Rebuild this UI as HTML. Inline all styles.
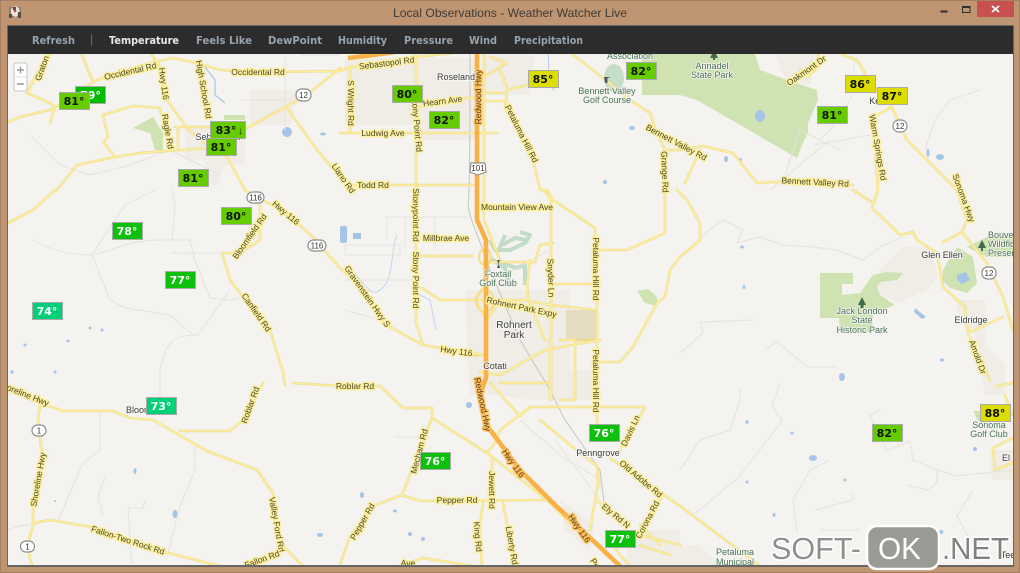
<!DOCTYPE html>
<html><head><meta charset="utf-8"><title>Local Observations - Weather Watcher Live</title>
<style>
html,body{margin:0;padding:0;width:1020px;height:573px;overflow:hidden;background:#bf9470}
svg{display:block;position:absolute;left:0;top:0}
.g{fill:none;stroke:#e4e3df;stroke-width:1}
.r{fill:none;stroke:#ecd98a;stroke-width:2.6;stroke-linejoin:round;stroke-linecap:round}
.ri{fill:none;stroke:#fbee9c;stroke-width:1.6;stroke-linejoin:round;stroke-linecap:round}
.h{fill:none;stroke:#f9b044;stroke-width:4.6;stroke-linejoin:round}
text{font-family:"Liberation Sans",sans-serif}
.l{font-size:8.5px;fill:#4c4a2c;stroke:#fbee9c;stroke-width:3;paint-order:stroke;text-anchor:middle;stroke-linejoin:round}
.lh{font-size:8.5px;fill:#5a3a10;stroke:#fbc060;stroke-width:3;paint-order:stroke;text-anchor:middle;stroke-linejoin:round}
.p{font-size:9px;fill:#3d3d3d;stroke:#f7f6f3;stroke-width:2;paint-order:stroke;text-anchor:middle}
.pg{font-size:9px;fill:#4c7458;stroke:#f5f5f0;stroke-width:1.5;paint-order:stroke;text-anchor:middle}
.s{font-size:8px;fill:#333;text-anchor:middle}
.sh{fill:#fff;stroke:#8f8f8f;stroke-width:1.2}
.n{font-family:"DejaVu Sans",sans-serif;font-weight:bold;font-size:11px;fill:#98a3ad}
.b{stroke:#aaa;stroke-width:1}
.t{font-family:"DejaVu Sans",sans-serif;font-weight:bold;font-size:11px;text-anchor:middle}
.w{fill:#fff}.k{fill:#0a1400}
.lk{fill:#a4c4e8}
</style></head><body>
<svg width="1020" height="573" viewBox="0 0 1020 573" xmlns="http://www.w3.org/2000/svg">
<rect width="1020" height="573" fill="#bf9470"/>
<rect x="0.5" y="0.5" width="1019" height="572" fill="none" stroke="#a57f60"/>
<rect x="7" y="25" width="1007" height="542" fill="#666"/>
<svg x="8" y="26" width="1005" height="539" viewBox="8 26 1005 539">
<rect x="8" y="26" width="1005" height="539" fill="#f4f3f0"/>
<!-- tan urban areas -->
<g fill="#f0ede6">
<path d="M345 58H475V140H420V125H345Z"/>
<path d="M484 55H535L530 95H484Z"/>
<path d="M185 125H245V165H225L218 185H205V160H185Z"/>
<path d="M250 90H300L290 125H250Z"/>
<path d="M465 290H570V370H600V400H530L500 395H470Z"/>
<path d="M877 280L880 270 903 247H930L938 277 927 290 897 303 880 293Z"/>
<path d="M955 300H985V345L975 335 960 320Z"/>
<path d="M975 335L1005 365V395H985Z"/>
<path d="M990 450H1013V480H992Z"/>
<path d="M560 500L595 525 590 550 565 530Z"/>
<path d="M630 530H680V565H625Z"/>
<path d="M680 545H700L720 566H680Z"/>
<path d="M775 54H815L810 85 785 78Z"/>
</g>
<rect x="566" y="310" width="30" height="29" fill="#e6dcc2"/>
<!-- parks -->
<g fill="#cfe2b2">
<path d="M642 54H755L760 70 787 80 817 90 818 100 808 123V133L803 143 797 158 697 100 680 95H642Z"/>
<path d="M820 273H853V284H842V295L860 293 873 275 887 272 903 273 897 280 880 282 877 287 880 295 895 305 873 313 872 332H840L839 318H820Z"/>
<path d="M943 270L957 247 973 257 977 283 967 293 950 288 942 280Z"/>
<path d="M967 247L987 237H1013V257H987Z"/>
<path d="M133 128L153 117 163 133V150H155L150 133Z"/>
<path d="M637 291L648 289 657 297 657 306 645 303Z"/>
<path d="M973 411H982V421H978Z"/>
<path d="M224 115H245V120H224Z"/>
</g>
<ellipse cx="614" cy="78" rx="10" ry="14" fill="#c6dec8"/>
<g fill="none" stroke="#c3dcc6" stroke-width="4" stroke-linejoin="round">
<path d="M490 240L495 250 510 250 525 243 530 235 520 232"/>
<path d="M502 245L515 238 527 240"/>
<path d="M500 262L516 268 525 265 525 285"/>
<path d="M490 258L505 268 510 285"/>
<path d="M505 235L498 252"/>
</g>
<!-- water -->
<g class="lk">
<ellipse cx="287" cy="132" rx="5" ry="5"/>
<ellipse cx="760" cy="116" rx="5" ry="6"/>
<rect x="340" y="226" width="7" height="17" rx="2"/>
<rect x="353" y="233" width="8" height="6"/>
<path d="M957 275L966 272 970 280 962 284 957 280Z"/>
<ellipse cx="940" cy="157" rx="4" ry="3"/>
<ellipse cx="928" cy="153" rx="1.5" ry="4"/>
<ellipse cx="469" cy="405" rx="3" ry="3"/>
<ellipse cx="813" cy="458" rx="4" ry="3"/>
<ellipse cx="175" cy="514" rx="2.5" ry="4"/>
<ellipse cx="842" cy="377" rx="3" ry="4"/>
<path d="M915 308L926 317 922 319 914 312Z"/>
<ellipse cx="632" cy="128" rx="3" ry="2"/>
<ellipse cx="323" cy="134" rx="3" ry="1.5"/>
<ellipse cx="605" cy="182" rx="2" ry="2"/>
<ellipse cx="740" cy="160" rx="2" ry="2"/>
<ellipse cx="726" cy="159" rx="2" ry="3"/>
<ellipse cx="742" cy="247" rx="2" ry="1.5"/>
<ellipse cx="744" cy="287" rx="1.5" ry="2"/>
<ellipse cx="942" cy="360" rx="2" ry="1.5"/>
<ellipse cx="941" cy="532" rx="2.5" ry="2"/>
<ellipse cx="975" cy="449" rx="2" ry="2"/>
<ellipse cx="747" cy="482" rx="1.5" ry="1.5"/>
<ellipse cx="320" cy="535" rx="3" ry="2"/>
<ellipse cx="135" cy="471" rx="1.5" ry="3"/>
<ellipse cx="55" cy="501" rx="1" ry="1"/>
<ellipse cx="90" cy="328" rx="1.5" ry="1.5"/>
<ellipse cx="68" cy="341" rx="1.5" ry="1.5"/>
<ellipse cx="102" cy="330" rx="1.5" ry="1.5"/>
<ellipse cx="25" cy="345" rx="1.5" ry="1.5"/>
<ellipse cx="55" cy="372" rx="1.5" ry="1.5"/>
<ellipse cx="12" cy="372" rx="1.5" ry="2"/>
<ellipse cx="362" cy="495" rx="2" ry="3"/>
<ellipse cx="395" cy="511" rx="2" ry="1.5"/>
<ellipse cx="410" cy="534" rx="2" ry="2"/>
<ellipse cx="423" cy="539" rx="2" ry="2"/>
<ellipse cx="845" cy="480" rx="1.5" ry="1.5"/>
<ellipse cx="747" cy="422" rx="1.5" ry="2"/>
<ellipse cx="792" cy="433" rx="1.5" ry="1.5"/>
<ellipse cx="774" cy="515" rx="1.5" ry="2"/>
</g>
<path d="M548 54C550 70 545 85 555 90" fill="none" stroke="#b5cde8" stroke-width="1"/>
<path d="M205 67L215 80 215 95 225 103" fill="none" stroke="#a9c4e4" stroke-width="1.2"/>
<path d="M397 235C390 250 395 280 380 290 370 300 360 275 350 270" fill="none" stroke="#c3d6ec" stroke-width="1"/>
<path d="M420 295L430 300 436 330" fill="none" stroke="#c3d6ec" stroke-width="1"/>
<!-- grey minor roads -->
<g class="g">
<path d="M33 240C50 250 70 255 92 255L125 205 155 190"/>
<path d="M92 255L110 300 125 308 170 315 193 335 198 335 230 290"/>
<path d="M92 255C115 250 130 240 160 240H172L175 205 172 190"/>
<path d="M172 240L190 240 195 260 210 298 230 300 243 297"/>
<path d="M222 253H172"/>
<path d="M198 335C170 335 165 345 160 370V400"/>
<path d="M100 411V450L83 463 57 523"/>
<path d="M105 476L98 496 103 516"/>
<path d="M195 446V471L180 506 168 553"/>
<path d="M145 500L143 508H128L132 566"/>
<path d="M345 255H400V245H345ZM345 280H420M345 310L380 320"/>
<path d="M385 217H470M387 217V240M405 217V250M435 217V250"/>
<path d="M700 237L723 220 743 230 737 243 760 237 783 245 813 247 837 250 863 260 880 247 903 237"/>
<path d="M680 353L703 333 700 322 753 320"/>
<path d="M765 350L777 342 807 367H837"/>
<path d="M780 383L772 406 782 421 738 478 693 515"/>
<path d="M740 388V400L730 430 700 440 680 470"/>
<path d="M830 460L810 470 793 500 797 533"/>
<path d="M880 410L870 416 887 451 910 441 913 460 937 470V483L927 490 907 485"/>
<path d="M937 470L957 476 1013 470"/>
<path d="M815 510L853 500V493M820 530H860"/>
<path d="M973 490L957 516 970 540"/>
<path d="M840 150L800 130 785 175M855 60L850 100 830 130 815 145 870 135"/>
<path d="M980 90L950 100 935 120 925 150"/>
<path d="M770 190L800 165 830 140"/>
<path d="M285 55V130M240 100H290M300 55H340"/>
<path d="M30 135L60 165 90 175 130 165 170 150"/>
<path d="M170 150L220 175"/>
<path d="M395 437H430M520 420L560 455 600 480"/>
<path d="M555 440L600 500M600 470V490"/>
<path d="M505 275L550 250"/>
<path d="M8 530C20 525 30 525 33 523"/>
</g>
<path d="M470 54C470 120 470 190 468 205 470 220 478 235 490 270L520 340 550 390 565 420 600 470 605 510" fill="none" stroke="#c5c5c2" stroke-width="1"/>
<!-- roads -->
<g id="rd">
<path class="r" d="M93 82L110 75 150 63 173 58 197 63 220 70 267 72 340 71 350 67 417 57 453 53"/>
<path class="r" d="M152 55L160 67 165 97 187 128 200 140 227 157 245 190 255 197 283 210 313 237 340 268 350 277 383 323 423 345 483 355"/>
<path class="r" d="M340 68L307 95 247 128"/>
<path class="r" d="M287 108L317 150 340 177 352 185H478"/>
<path class="r" d="M197 63L207 117"/>
<path class="r" d="M160 108L170 147"/>
<path class="r" d="M27 93L50 103 55 107 50 123M103 115L133 106 160 108M103 115L108 137 103 142 115 157 140 153 180 150 227 147M57 190L77 165 115 157"/>
<path class="r" d="M0 123L8 122 20 117 50 110 75 97 93 82 82 55"/>
<path class="r" d="M50 55L37 73 27 93"/>
<path class="r" d="M175 127H212M178 127V148"/>
<path class="r" d="M350 67V133"/>
<path class="r" d="M340 133H497"/>
<path class="r" d="M416 54V323L423 345"/>
<path class="r" d="M417 107L467 98H475M484 101H507"/>
<path class="r" d="M505 108L533 160 540 190 547 190 553 200 595 228 597 300V425"/>
<path class="r" d="M484 93H507L505 108M484 77L507 63 490 57M507 90L527 85M500 70L507 87"/>
<path class="r" d="M573 55L593 70 630 100 650 113 657 133 665 150 680 150 703 146 733 153 757 183 773 182 820 182 853 185"/>
<path class="r" d="M700 150L685 183M665 150V233L627 250H600"/>
<path class="r" d="M843 55L857 60 873 87 890 103 907 140 947 180 957 190 967 220 962 232 987 263 1003 297 1013 330"/>
<path class="r" d="M892 107L873 117 878 190 872 208 900 235 913 232 917 240 937 253 943 287 965 307 968 333 990 380"/>
<path class="r" d="M853 190L873 203M943 242L962 232M970 332L1003 317"/>
<path class="r" d="M800 70L807 77 818 67V55"/>
<path class="r" d="M677 190L687 200 700 223V240L680 257 670 270 665 297 657 303 633 347 620 362H597"/>
<path class="r" d="M260 203V240L240 253H222L230 280 243 297 270 330 283 372 285 385"/>
<path class="r" d="M263 383L243 420 230 431H180"/>
<path class="r" d="M293 383L340 386H380L403 408H432V418L487 453 547 500 587 540"/>
<path class="r" d="M432 418L402 495 420 501 547 500M402 495L373 506 350 536 340 565"/>
<path class="r" d="M492 458V501M487 453L495 443 500 430 530 407H645L620 450M483 503L480 526 482 566M503 503L515 566M403 565L423 558 473 566"/>
<path class="r" d="M530 407L520 416 490 383M500 383H550M540 420L580 453 597 466 598 483 590 530"/>
<path class="r" d="M610 458L680 506 760 566M663 495L633 540M597 501L630 526"/>
<path class="r" d="M7 390L40 403 63 411H113L130 418 153 420 207 451 257 470 273 493 277 533 283 546 303 566"/>
<path class="r" d="M40 403L38 420 43 463 33 500V526L27 546 32 566"/>
<path class="r" d="M33 523L50 520 97 528 160 551 220 566M250 566L283 550"/>
<path class="r" d="M8 223L33 210 55 190"/>
<path class="r" d="M484 54V220L500 260M416 256H472M484 262H535L540 245 553 243M544 190L551 200V400M475 300L525 300 550 305 597 310"/>
<path class="r" d="M422 288L440 300 480 300M465 355L483 355M480 372L500 375 545 350 600 340M550 340V400M595 340H560M560 340H575L575 400H560"/>
<path class="r" d="M530 260L527 285 528 300 545 340M487 320L475 300 485 285M487 320L500 300M551 284H597"/>
<path class="r" d="M1012 438L993 448 995 470 1012 463M997 386L1012 383M1005 395L1012 415"/>
<path class="r" d="M640 535L680 545M640 545L670 555M610 540L620 555 630 566M640 525L660 545"/>
</g>
<g>
<path class="ri" d="M93 82L110 75 150 63 173 58 197 63 220 70 267 72 340 71 350 67 417 57 453 53"/>
<path class="ri" d="M152 55L160 67 165 97 187 128 200 140 227 157 245 190 255 197 283 210 313 237 340 268 350 277 383 323 423 345 483 355"/>
<path class="ri" d="M340 68L307 95 247 128"/>
<path class="ri" d="M287 108L317 150 340 177 352 185H478"/>
<path class="ri" d="M197 63L207 117M160 108L170 147"/>
<path class="ri" d="M27 93L50 103 55 107 50 123M103 115L133 106 160 108M103 115L108 137 103 142 115 157 140 153 180 150 227 147M57 190L77 165 115 157"/>
<path class="ri" d="M0 123L8 122 20 117 50 110 75 97 93 82 82 55M50 55L37 73 27 93M175 127H212M178 127V148"/>
<path class="ri" d="M350 67V133M340 133H497M416 54V323L423 345M417 107L467 98H475M484 101H507"/>
<path class="ri" d="M505 108L533 160 540 190 547 190 553 200 595 228 597 300V425"/>
<path class="ri" d="M484 93H507L505 108M484 77L507 63 490 57M507 90L527 85M500 70L507 87"/>
<path class="ri" d="M573 55L593 70 630 100 650 113 657 133 665 150 680 150 703 146 733 153 757 183 773 182 820 182 853 185"/>
<path class="ri" d="M700 150L685 183M665 150V233L627 250H600"/>
<path class="ri" d="M843 55L857 60 873 87 890 103 907 140 947 180 957 190 967 220 962 232 987 263 1003 297 1013 330"/>
<path class="ri" d="M892 107L873 117 878 190 872 208 900 235 913 232 917 240 937 253 943 287 965 307 968 333 990 380"/>
<path class="ri" d="M853 190L873 203M943 242L962 232M970 332L1003 317M800 70L807 77 818 67V55"/>
<path class="ri" d="M677 190L687 200 700 223V240L680 257 670 270 665 297 657 303 633 347 620 362H597"/>
<path class="ri" d="M260 203V240L240 253H222L230 280 243 297 270 330 283 372 285 385"/>
<path class="ri" d="M263 383L243 420 230 431H180M293 383L340 386H380L403 408H432V418L487 453 547 500 587 540"/>
<path class="ri" d="M432 418L402 495 420 501 547 500M402 495L373 506 350 536 340 565"/>
<path class="ri" d="M492 458V501M487 453L495 443 500 430 530 407H645L620 450M483 503L480 526 482 566M503 503L515 566M403 565L423 558 473 566"/>
<path class="ri" d="M530 407L520 416 490 383M500 383H550M540 420L580 453 597 466 598 483 590 530"/>
<path class="ri" d="M610 458L680 506 760 566M663 495L633 540M597 501L630 526"/>
<path class="ri" d="M7 390L40 403 63 411H113L130 418 153 420 207 451 257 470 273 493 277 533 283 546 303 566"/>
<path class="ri" d="M40 403L38 420 43 463 33 500V526L27 546 32 566M33 523L50 520 97 528 160 551 220 566M250 566L283 550M8 223L33 210 55 190"/>
<path class="ri" d="M484 54V220L500 260M416 256H472M484 262H535L540 245 553 243M544 190L551 200V400M475 300L525 300 550 305 597 310"/>
<path class="ri" d="M422 288L440 300 480 300M480 372L500 375 545 350 600 340M550 340V400M560 340H575L575 400H560"/>
<path class="ri" d="M530 260L527 285 528 300 545 340M487 320L475 300 485 285M487 320L500 300M551 284H597"/>
<path class="ri" d="M1012 438L993 448 995 470 1012 463M997 386L1012 383M1005 395L1012 415"/>
<path class="ri" d="M640 535L680 545M640 545L670 555M610 540L620 555 630 566M640 525L660 545"/>
</g>
<!-- interchange rings -->
<ellipse cx="485" cy="301" rx="9" ry="11" fill="none" stroke="#f2de8c" stroke-width="2"/>
<ellipse cx="485" cy="257" rx="6" ry="8" fill="none" stroke="#f2de8c" stroke-width="2"/>
<!-- highways -->
<path class="h" d="M348 58L373 55 395 52"/>
<path class="h" d="M477 50V220L486 240V378L479 396 485 423 520 470 553 503 620 566"/>
<!-- shields -->
<g>
<rect x="296" y="89" width="15" height="12" rx="5.5" class="sh"/><text x="303.5" y="98" class="s">12</text>
<path d="M471 163H485L486 172 478 175 470 172Z" class="sh"/><text x="478" y="171" class="s">101</text>
<rect x="247" y="192" width="17" height="11" rx="5.5" class="sh"/><text x="255.5" y="200.5" class="s">116</text>
<rect x="308" y="240" width="18" height="11" rx="5.5" class="sh"/><text x="317" y="248.5" class="s">116</text>
<rect x="893" y="120" width="14" height="12" rx="6" class="sh"/><text x="900" y="129" class="s">12</text>
<rect x="982" y="267" width="14" height="12" rx="5.5" class="sh"/><text x="989" y="276" class="s">12</text>
<rect x="32" y="425" width="14" height="11" rx="5.5" class="sh"/><text x="39" y="433.5" class="s">1</text>
<rect x="20.5" y="541" width="14" height="11" rx="5.5" class="sh"/><text x="27.5" y="549.5" class="s">1</text>
</g>
<!-- road labels -->
<g>
<text class="l" transform="translate(131,74) rotate(-13)">Occidental Rd</text>
<text class="l" x="258" y="75">Occidental Rd</text>
<text class="l" transform="translate(161,84) rotate(82)">Hwy 116</text>
<text class="l" transform="translate(201,90) rotate(80)">High School Rd</text>
<text class="l" transform="translate(165,132) rotate(80)">Ragle Rd</text>
<text class="l" transform="translate(47,63) rotate(-70)">Graton Rd</text>
<text class="l" transform="translate(341,180) rotate(55)">Llano Rd</text>
<text class="l" transform="translate(387,66) rotate(-7)">Sebastopol Rd</text>
<text class="l" transform="translate(348,103) rotate(90)">S Wright Rd</text>
<text class="l" transform="translate(443,104) rotate(-7)">Hearn Ave</text>
<text class="l" transform="translate(414,124) rotate(85)">Stony Point Rd</text>
<text class="l" x="383" y="136">Ludwig Ave</text>
<text class="lh" transform="translate(481,97) rotate(-90)">Redwood Hwy</text>
<text class="l" transform="translate(519,135) rotate(63)">Petaluma Hill Rd</text>
<text class="l" x="373" y="188">Todd Rd</text>
<text class="l" transform="translate(675,145) rotate(28)">Bennett Valley Rd</text>
<text class="l" transform="translate(662,172) rotate(88)">Grange Rd</text>
<text class="l" transform="translate(815,185) rotate(3)">Bennett Valley Rd</text>
<text class="l" transform="translate(808,73) rotate(-35)">Oakmont Dr</text>
<text class="l" transform="translate(875,148) rotate(80)">Warm Springs Rd</text>
<text class="l" transform="translate(961,199) rotate(70)">Sonoma Hwy</text>
<text class="l" transform="translate(284,215) rotate(40)">Hwy 116</text>
<text class="l" transform="translate(252,238) rotate(-55)">Bloomfield Rd</text>
<text class="l" transform="translate(254,314) rotate(55)">Canfield Rd</text>
<text class="l" transform="translate(365,298) rotate(55)">Gravenstein Hwy S</text>
<text class="l" x="517" y="210">Mountain View Ave</text>
<text class="l" x="446" y="241">Millbrae Ave</text>
<text class="l" transform="translate(413,215) rotate(90)">Stonypoint Rd</text>
<text class="l" transform="translate(413,280) rotate(90)">Stony Point Rd</text>
<text class="l" transform="translate(456,354) rotate(8)">Hwy 116</text>
<text class="l" transform="translate(521,310) rotate(12)">Rohnert Park Expy</text>
<text class="l" transform="translate(548,278) rotate(88)">Snyder Ln</text>
<text class="l" transform="translate(593,269) rotate(90)">Petaluma Hill Rd</text>
<text class="l" transform="translate(593,381) rotate(90)">Petaluma Hill Rd</text>
<text class="l" transform="translate(253,406) rotate(-70)">Roblar Rd</text>
<text class="l" x="355" y="389">Roblar Rd</text>
<text class="l" transform="translate(22,396) rotate(22)">Shoreline Hwy</text>
<text class="l" transform="translate(41,480) rotate(-80)">Shoreline Hwy</text>
<text class="l" transform="translate(127,543) rotate(18)">Fallon-Two Rock Rd</text>
<text class="l" transform="translate(274,525) rotate(80)">Valley Ford Rd</text>
<text class="l" transform="translate(263,562) rotate(-20)">Fallon Rd</text>
<text class="lh" transform="translate(480,405) rotate(78)">Redwood Hwy</text>
<text class="lh" transform="translate(511,465) rotate(55)">Hwy 116</text>
<text class="lh" transform="translate(577,530) rotate(55)">Hwy 116</text>
<text class="l" transform="translate(422,452) rotate(-75)">Mecham Rd</text>
<text class="l" x="457" y="503">Pepper Rd</text>
<text class="l" transform="translate(365,523) rotate(-60)">Pepper Rd</text>
<text class="l" transform="translate(489,490) rotate(90)">Jewett Rd</text>
<text class="l" transform="translate(475,537) rotate(85)">King Rd</text>
<text class="l" transform="translate(509,546) rotate(80)">Liberty Rd</text>
<text class="l" transform="translate(633,432) rotate(-65)">Davis Ln</text>
<text class="l" transform="translate(639,481) rotate(40)">Old Adobe Rd</text>
<text class="l" transform="translate(614,518) rotate(40)">Ely Rd N</text>
<text class="l" transform="translate(650,521) rotate(-62)">Corona Rd</text>
<text class="l" transform="translate(975,358) rotate(70)">Amold Dr</text>
<text class="l" x="408" y="566">Ave</text>
<text class="l" transform="translate(593,566) rotate(60)">Pet</text>
</g>
<!-- place labels -->
<g>
<text class="p" x="456" y="80">Roseland</text>
<text class="p" x="218" y="140">Sebastopol</text>
<text class="pg" x="630" y="59">Association</text>
<text class="pg" x="607" y="94">Bennett Valley</text>
<text class="pg" x="607" y="103">Golf Course</text>
<text class="pg" x="712" y="69">Annadel</text>
<text class="pg" x="712" y="78">State Park</text>
<text class="pg" x="862" y="314">Jack London</text>
<text class="pg" x="862" y="323">State</text>
<text class="pg" x="862" y="333">Historic Park</text>
<text class="p" x="942" y="258">Glen Ellen</text>
<text class="p" x="971" y="323">Eldridge</text>
<text class="pg" x="988" y="238" style="text-anchor:start">Bouverie</text>
<text class="pg" x="988" y="247" style="text-anchor:start">Wildflower</text>
<text class="pg" x="988" y="256" style="text-anchor:start">Preserve</text>
<text class="pg" x="498" y="277">Foxtail</text>
<text class="pg" x="498" y="286">Golf Club</text>
<text class="p" x="514" y="328" style="font-size:10px">Rohnert</text>
<text class="p" x="514" y="338" style="font-size:10px">Park</text>
<text class="p" x="495" y="369">Cotati</text>
<text class="p" x="598" y="456">Penngrove</text>
<text class="p" x="147" y="413">Bloomfield</text>
<text class="pg" x="989" y="428">Sonoma</text>
<text class="pg" x="989" y="437">Golf Club</text>
<text class="pg" x="735" y="555">Petaluma</text>
<text class="pg" x="735" y="565">Municipal</text>
<text class="p" x="1006" y="461">El</text>
<text class="p" x="888" y="104">Kenwood</text>
<text class="p" x="1008" y="558">Tee</text>
</g>
<!-- tree icons -->
<g fill="#3f6b4c">
<path d="M712 54H716L718 58H710ZM713 58H715V60H713Z"/>
<path d="M862 297L866 305H863.5V308H860.500V305H858Z"/>
<path d="M982 240L986 248H983V251H981V248H978Z"/>
<path d="M497 260L500 260 498.500 264 500 268H497L498.500 264Z" fill="#556"/>
<path d="M604 77L611 77 607.500 78 607.500 83H605Z" fill="#556"/>
</g>
<!-- zoom control -->
<rect x="14" y="63" width="13" height="28" rx="2" fill="#fff" stroke="#c4c4c4"/>
<path d="M14 77H27" stroke="#ddd"/>
<path d="M17 70H24M20.500 66.500V73.500M17 84H24" stroke="#999" stroke-width="1.4" fill="none"/>
<!-- temperature labels -->
<g>
<rect x="75.500" y="86.500" width="30" height="17" fill="#00bb00" class="b"/><text x="90.500" y="99" class="t w">79°</text>
<rect x="59.500" y="92.500" width="30" height="17" fill="#66cc00" class="b"/><text x="74" y="105" class="t k">81°</text>
<rect x="210.500" y="121.500" width="35" height="17" fill="#66cc00" class="b"/><text x="226" y="134" class="t k">83°</text><text x="238" y="134" class="k" style="font-size:10px">↓</text>
<rect x="206.500" y="138.500" width="30" height="17" fill="#66cc00" class="b"/><text x="221" y="151" class="t k">81°</text>
<rect x="178.500" y="169.500" width="30" height="17" fill="#66cc00" class="b"/><text x="193" y="182" class="t k">81°</text>
<rect x="392.500" y="85.500" width="30" height="17" fill="#66cc00" class="b"/><text x="407" y="98" class="t k">80°</text>
<rect x="429.500" y="111.500" width="30" height="17" fill="#66cc00" class="b"/><text x="444" y="124" class="t k">82°</text>
<rect x="528.500" y="70.500" width="30" height="17" fill="#dddd00" class="b"/><text x="543" y="83" class="t k">85°</text>
<rect x="626.500" y="62.500" width="30" height="17" fill="#66cc00" class="b"/><text x="641" y="75" class="t k">82°</text>
<rect x="845.500" y="75.500" width="30" height="17" fill="#dddd00" class="b"/><text x="860" y="88" class="t k">86°</text>
<rect x="877.500" y="87.500" width="30" height="17" fill="#dddd00" class="b"/><text x="892" y="100" class="t k">87°</text>
<rect x="817.500" y="106.500" width="30" height="17" fill="#66cc00" class="b"/><text x="832" y="119" class="t k">81°</text>
<rect x="112.500" y="222.500" width="30" height="17" fill="#0cc00c" class="b"/><text x="127" y="235" class="t w">78°</text>
<rect x="221.500" y="207.500" width="30" height="17" fill="#66cc00" class="b"/><text x="236" y="220" class="t k">80°</text>
<rect x="165.500" y="271.500" width="30" height="17" fill="#0cc00c" class="b"/><text x="180" y="284" class="t w">77°</text>
<rect x="32.500" y="302.500" width="30" height="17" fill="#00d077" class="b"/><text x="47" y="315" class="t w">74°</text>
<rect x="146.500" y="397.500" width="30" height="17" fill="#00d077" class="b"/><text x="161" y="410" class="t w">73°</text>
<rect x="420.500" y="452.500" width="30" height="17" fill="#0cc00c" class="b"/><text x="435" y="465" class="t w">76°</text>
<rect x="589.500" y="424.500" width="30" height="17" fill="#0cc00c" class="b"/><text x="604" y="437" class="t w">76°</text>
<rect x="605.500" y="530.500" width="30" height="17" fill="#0cc00c" class="b"/><text x="620" y="543" class="t w">77°</text>
<rect x="872.500" y="424.500" width="30" height="17" fill="#66cc00" class="b"/><text x="887" y="437" class="t k">82°</text>
<rect x="980.500" y="404.500" width="30" height="17" fill="#dddd00" class="b"/><text x="995" y="417" class="t k">88°</text>
</g>
<!-- header bar -->
<rect x="8" y="26" width="1005" height="28" fill="#2c2c2c"/>
<text x="32" y="44" class="n" textLength="43" lengthAdjust="spacingAndGlyphs">Refresh</text>
<path d="M91.500 34V46" stroke="#666"/>
<text x="109" y="44" class="n" style="fill:#e8e8e8" textLength="70" lengthAdjust="spacingAndGlyphs">Temperature</text>
<text x="196" y="44" class="n" textLength="56" lengthAdjust="spacingAndGlyphs">Feels Like</text>
<text x="268" y="44" class="n" textLength="54" lengthAdjust="spacingAndGlyphs">DewPoint</text>
<text x="338" y="44" class="n" textLength="49" lengthAdjust="spacingAndGlyphs">Humidity</text>
<text x="404" y="44" class="n" textLength="49" lengthAdjust="spacingAndGlyphs">Pressure</text>
<text x="469" y="44" class="n" textLength="28" lengthAdjust="spacingAndGlyphs">Wind</text>
<text x="514" y="44" class="n" textLength="69" lengthAdjust="spacingAndGlyphs">Precipitation</text>
</svg>
<!-- title bar -->
<text x="393" y="17" style="font-size:12px;fill:#3f3a36" textLength="234" lengthAdjust="spacingAndGlyphs">Local Observations - Weather Watcher Live</text>
<g>
<rect x="9" y="7" width="12" height="10" fill="#8a8078"/>
<path d="M11 9L15 6 19 8 20 13 16 17 11 15Z" fill="#e8e4dc"/>
<path d="M13 7H16V10H13ZM9 14H12V18H9ZM18 12H21V18H18Z" fill="#5a4a3a"/>
<circle cx="15" cy="11" r="1.300" fill="#c05030"/>
</g>
<rect x="940.500" y="10.500" width="7" height="2" fill="#2f2f2f"/>
<rect x="962.500" y="6.500" width="7.500" height="6" fill="none" stroke="#2f2f2f"/>
<path d="M962 7H970" stroke="#2f2f2f" stroke-width="2"/>
<rect x="977" y="1" width="37" height="16" fill="#c75050"/>
<path d="M992 6L999 12M999 6L992 12" stroke="#fff" stroke-width="1.800"/>
<!-- watermark -->
<g>
<text x="771" y="559" style="font-size:31px;fill:#8f8f8f;stroke:#fff;stroke-width:3;paint-order:stroke" textLength="90" lengthAdjust="spacingAndGlyphs">SOFT-</text>
<rect x="867" y="526" width="72" height="43" rx="10" fill="#9b9b96" stroke="#fff" stroke-width="2.500"/>
<text x="878" y="559" style="font-size:31px;fill:#fff" textLength="43" lengthAdjust="spacingAndGlyphs">OK</text>
<text x="942" y="559" style="font-size:31px;fill:#808080;stroke:#fff;stroke-width:3;paint-order:stroke" textLength="67" lengthAdjust="spacingAndGlyphs">.NET</text>
</g>
</svg>
</body></html>
